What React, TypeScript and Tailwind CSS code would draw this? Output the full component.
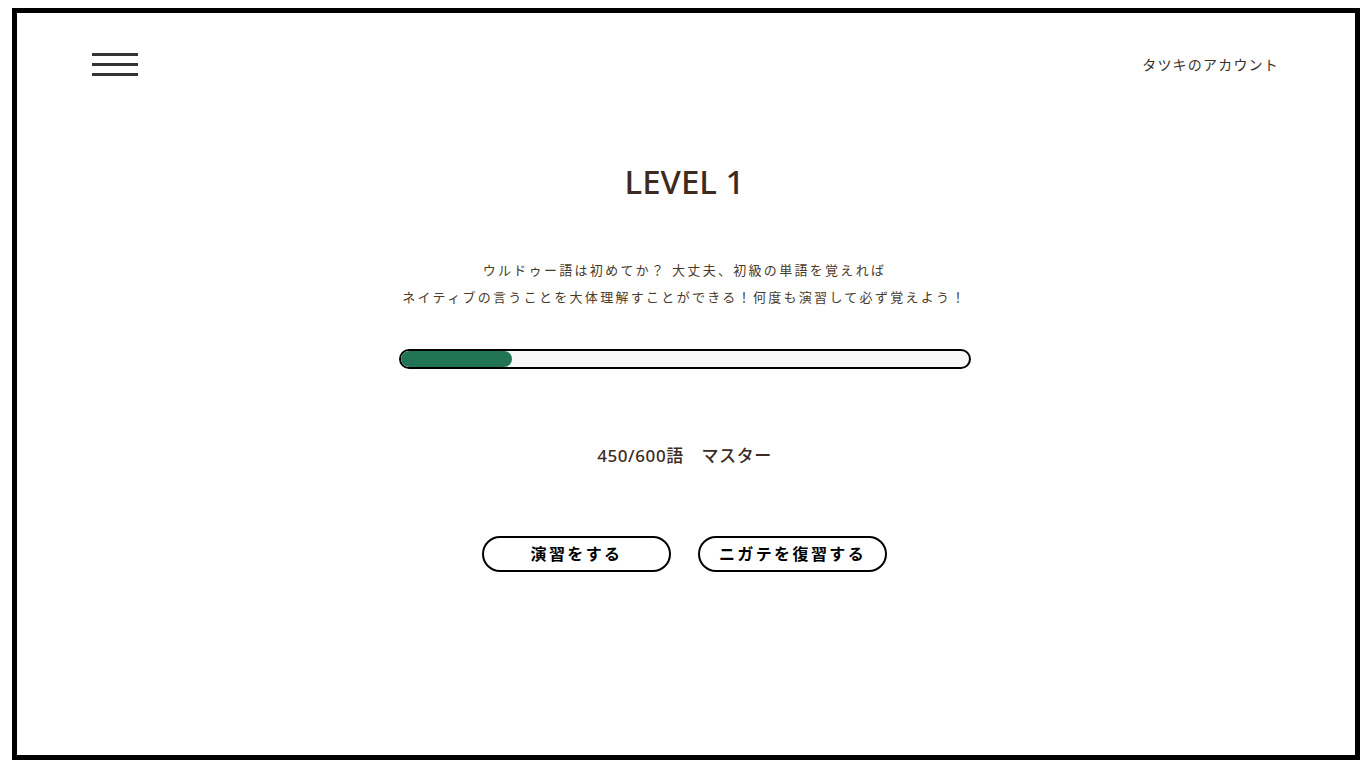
export default function App() {
    const progress = 112 / 572

    return (
        <div className="w-[1366px] h-[768px] bg-white pt-[8px] pl-[12px]" style={{ fontFamily: '"Noto Sans", "Noto Sans CJK JP", sans-serif' }}>
            <div className="w-[1348px] h-[752px] border-[5px] border-black flex flex-col">
                <div className="flex items-center justify-between h-[105px] pl-[75px] pr-[76px] pb-[3px]">
                    <div className="flex flex-col gap-[7px]">
                        <div className="w-[46px] h-[3px] bg-[#333]" />
                        <div className="w-[46px] h-[3px] bg-[#333]" />
                        <div className="w-[46px] h-[3px] bg-[#333]" />
                    </div>
                    <div className="text-[14px] tracking-[1.2px] text-[#3a3128]">タツキのアカウント</div>
                </div>

                <div className="flex flex-col items-center pr-[3px]">
                    <h1 className="text-[33px] font-medium text-[#3d2b1f] leading-none mt-[47px]">LEVEL 1</h1>

                    <div className="mt-[59px] text-[13px] leading-[27px] tracking-[2.3px] text-[#4a3a2a] text-center">
                        <p>ウルドゥー語は初めてか？ 大丈夫、初級の単語を覚えれば</p>
                        <p>ネイティブの言うことを大体理解すことができる！何度も演習して必ず覚えよう！</p>
                    </div>

                    <div className="mt-[38px] w-[572px] h-[20px] rounded-full border-2 border-black bg-[#f8f8f8] overflow-hidden">
                        <div className="h-full rounded-full bg-[#217556]" style={{ width: `${progress * 100}%` }} />
                    </div>

                    <div className="mt-[74px] text-[17px] font-medium tracking-[0.6px] text-[#3d2b1f]">450/600語　マスター</div>

                    <div className="mt-[67px] flex gap-[27px]">
                        <button className="w-[189px] h-[36px] rounded-full border-2 border-black text-[16px] font-bold tracking-[2.4px] text-black">演習をする</button>
                        <button className="w-[189px] h-[36px] rounded-full border-2 border-black text-[16px] font-bold tracking-[2.4px] text-black">ニガテを復習する</button>
                    </div>
                </div>
            </div>
        </div>
    )
}
